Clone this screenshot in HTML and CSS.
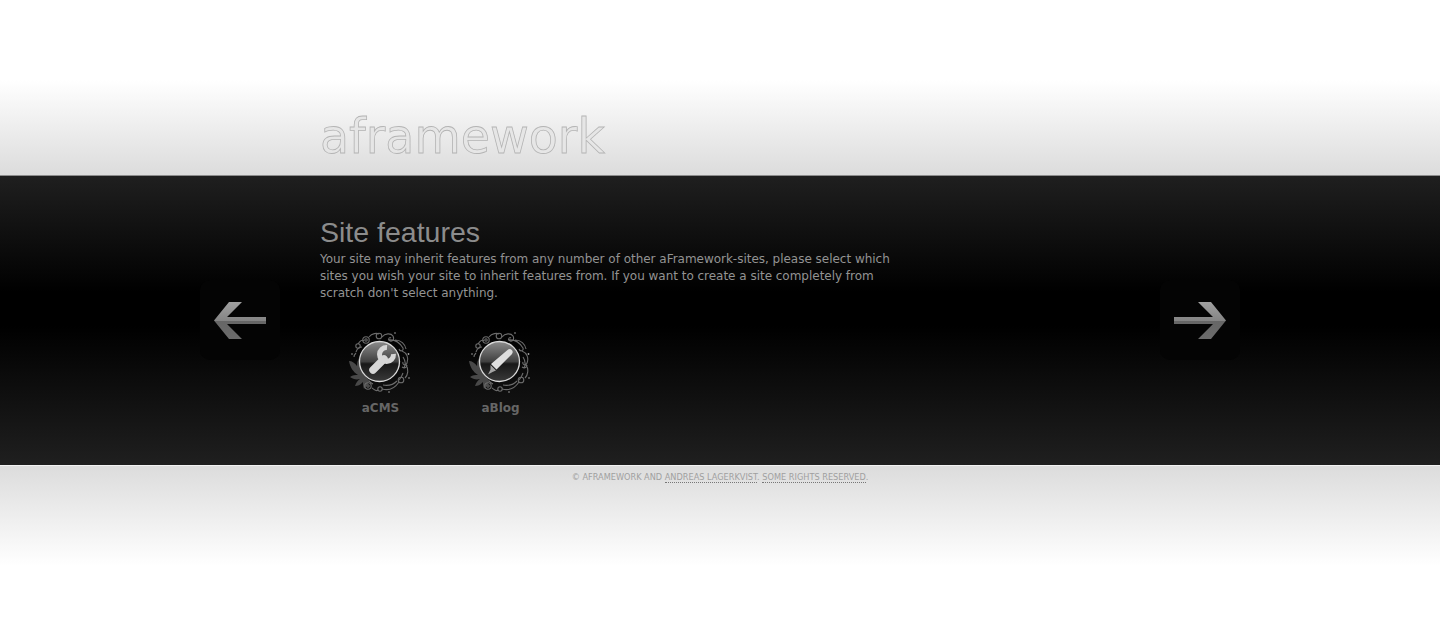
FILE: index.html

```html
<!DOCTYPE html>
<html lang="en">
<head>
  <meta charset="UTF-8" />
  <meta name="viewport" content="width=device-width, initial-scale=1.0" />
  <title>aFramework - Site features</title>
  <link rel="stylesheet" href="styles.css">
</head>
<body>
  <svg class="defs" width="0" height="0" aria-hidden="true">
    <defs>
      <linearGradient id="arrowFill" x1="0" y1="0" x2="0" y2="1">
        <stop offset="0" stop-color="#a0a0a0" />
        <stop offset="0.51" stop-color="#848484" />
        <stop offset="0.52" stop-color="#666666" />
        <stop offset="1" stop-color="#6c6c6c" />
      </linearGradient>
      <linearGradient id="discFill" x1="0" y1="0" x2="0" y2="1">
        <stop offset="0" stop-color="#8c8c8c" />
        <stop offset="0.5" stop-color="#404040" />
        <stop offset="0.56" stop-color="#181818" />
        <stop offset="1" stop-color="#3a3a3a" />
      </linearGradient>
      <symbol id="ornament" viewBox="0 0 64 64">
        <path d="M1 30c3 0 6 2 8 5 0-4 1-6 2-8 2 4 3 7 5 10 0 5 2 10 6 13-2 3-4 5-6 8-1-3-1-4-1-7-3 3-5 4-8 4 1-3 2-5 5-7-4 1-7 0-10-2 3-2 5-2 8-2-5-3-8-8-9-14z" fill="#484848" />
        <g fill="none" stroke="#6c6c6c" stroke-width="1.100">
          <circle cx="18" cy="9" r="3.200" />
          <circle cx="18" cy="9" r="1.200" />
          <circle cx="31" cy="5" r="2.800" />
          <circle cx="10" cy="15" r="2.200" />
          <circle cx="20" cy="55" r="3.200" />
          <circle cx="20" cy="55" r="1.200" />
          <circle cx="32" cy="58" r="2.200" />
          <circle cx="53" cy="49" r="2.800" />
          <path d="M21 6c3-4 8-4 10-3M34 6c3-4 9-4 11-1 2 4-2 7-4 4-1-2 1-3 2-2M40 9c7-1 12 3 15 8 1 3-3 4-4 1M47 9c6 0 10 4 11 9M54 20c5 2 7 7 5 12-1 3-5 2-4-1M54 36c3 2 5 0 5-2M58 34c3 4 2 10-1 13M24 57c3 2 4 4 6 2M34 58c7 2 13-1 17-7M35 54c5 1 10 0 14-4M10 13c2-3 4-5 6-3M8 21c1-3 3-5 6-5M6 26c0-2 1-3 2-4M55 42c-1 3-2 5-4 7M25 53c-2-1-3-2-4-3M55 26c2 3 3 7 1 11" />
        </g>
        <g fill="#a0a0a0">
          <circle cx="60.500" cy="23" r="0.900" />
          <circle cx="4" cy="23" r="0.800" />
          <circle cx="47" cy="2" r="0.800" />
          <circle cx="61" cy="47" r="0.800" />
          <circle cx="41" cy="61" r="0.800" />
        </g>
      </symbol>
    </defs>
  </svg>

  <header class="top">
    <div class="top-inner">
      <a class="logo" href="#">aframework</a>
    </div>
  </header>

  <main class="band">
    <div class="band-inner">
      <a class="arrow" href="#" aria-label="Previous">
        <svg width="80" height="80" viewBox="0 0 80 80">
          <path d="M14 40.500 29 22h13L27 37h39v7H27l15 15H29z" fill="url(#arrowFill)" />
        </svg>
      </a>

      <section class="content">
        <h2>Site features</h2>
        <p>Your site may inherit features from any number of other aFramework-sites, please select which sites you wish your site to inherit features from. If you want to create a site completely from scratch don't select anything.</p>

        <ul class="sites">
          <li class="site">
            <svg width="64" height="64" viewBox="0 0 64 64">
              <use href="#ornament" width="64" height="64" />
              <circle cx="31.500" cy="30.500" r="20" fill="url(#discFill)" stroke="#d8d8d8" stroke-width="1.300" />
              <path d="M25 39 36 28" fill="none" stroke="#d6d6d6" stroke-width="7.500" stroke-linecap="round" />
              <path d="M39 16.500a7 7 0 1 0 6.500 6.500" fill="none" stroke="#d6d6d6" stroke-width="5" />
            </svg>
            <span>aCMS</span>
          </li>
          <li class="site">
            <svg width="64" height="64" viewBox="0 0 64 64">
              <use href="#ornament" width="64" height="64" />
              <circle cx="31.500" cy="30.500" r="20" fill="url(#discFill)" stroke="#d8d8d8" stroke-width="1.300" />
              <path d="M39.500 19c1.300-1.300 3.200-1.200 4.300 0 1.200 1.200 1.200 3 0 4.200L28.500 38.500 23 33z" fill="#dedede" />
              <path d="M22.500 34l5.500 5.500-3 1.300-5 2.700 2.500-5z" fill="#a4a4a4" />
            </svg>
            <span>aBlog</span>
          </li>
        </ul>
      </section>

      <a class="arrow" href="#" aria-label="Next">
        <svg width="80" height="80" viewBox="0 0 80 80">
          <path d="M66 40.500 51 22H38l15 15H14v7h39L38 59h13z" fill="url(#arrowFill)" />
        </svg>
      </a>
    </div>
  </main>

  <footer class="bottom">
    <p>&copy; aFramework and <a href="#">Andreas Lagerkvist</a>. <a href="#">Some rights reserved</a>.</p>
  </footer>
</body>
</html>
```

FILE: styles.css

```css
html, body {
  margin: 0;
  padding: 0;
  background-color: #fff;
}
body {
  font-family: "DejaVu Sans", sans-serif;
  font-size: 12px;
  color: #939393;
}
a {
  color: inherit;
  text-decoration: none;
}
.defs {
  display: block;
  height: 0;
}

/* top */
.top {
  height: 175px;
  border-bottom: 1px solid #8c8c8c;
  background: linear-gradient(to bottom, #fff 80px, #dcdcdc 175px);
}
.top-inner {
  width: 800px;
  margin: 0 auto;
  height: 100%;
  display: flex;
  align-items: flex-end;
}
.logo {
  display: block;
  width: 286px;
  margin-bottom: 10px;
  font-family: "DejaVu Sans", sans-serif;
  font-size: 47.500px;
  line-height: 56px;
  white-space: nowrap;
  color: #e6e6e6;
  filter: grayscale(1);
  -webkit-text-stroke: 0.8px #b4b4b4;
}

/* dark band */
.band {
  height: 289px;
  border-bottom: 1px solid #f2f2f2;
  background: linear-gradient(to bottom, #1f1f1f 0, #000 116px, #000 150px, #1f1f1f 289px);
}
.band-inner {
  width: 1040px;
  height: 288px;
  margin: 0 auto;
  display: flex;
  justify-content: space-between;
  align-items: center;
}
.arrow {
  display: block;
  width: 80px;
  height: 80px;
  border-radius: 10px;
  background-color: #040404;
}
.arrow svg {
  display: block;
}
.content {
  flex: 1;
  align-self: flex-start;
  padding: 40px 0 0 40px;
}
.content h2 {
  margin: 0 0 2px;
  font-family: "Liberation Sans", Arial, sans-serif;
  font-weight: normal;
  font-size: 28.500px;
  line-height: 33px;
  color: #8c8c8c;
}
.content p {
  width: 580px;
  margin: 0;
  line-height: 17px;
  letter-spacing: -0.02px;
}
.sites {
  list-style: none;
  display: flex;
  margin: 29px 0 0;
  padding: 0;
}
.site {
  width: 120px;
  display: flex;
  flex-direction: column;
  align-items: center;
}
.site svg {
  display: block;
}
.site span {
  margin-top: 5px;
  padding-left: 1px;
  font-weight: bold;
  line-height: 16px;
  color: #666;
}

/* footer */
.bottom {
  height: 100px;
  background: linear-gradient(to bottom, #dcdcdc 0, #fff 100px);
}
.bottom p {
  margin: 0;
  padding-top: 6px;
  text-align: center;
  font-size: 8.200px;
  line-height: 11px;
  text-transform: uppercase;
  color: #a0a0a0;
}
.bottom a {
  border-bottom: 1px dotted #777;
}
```
